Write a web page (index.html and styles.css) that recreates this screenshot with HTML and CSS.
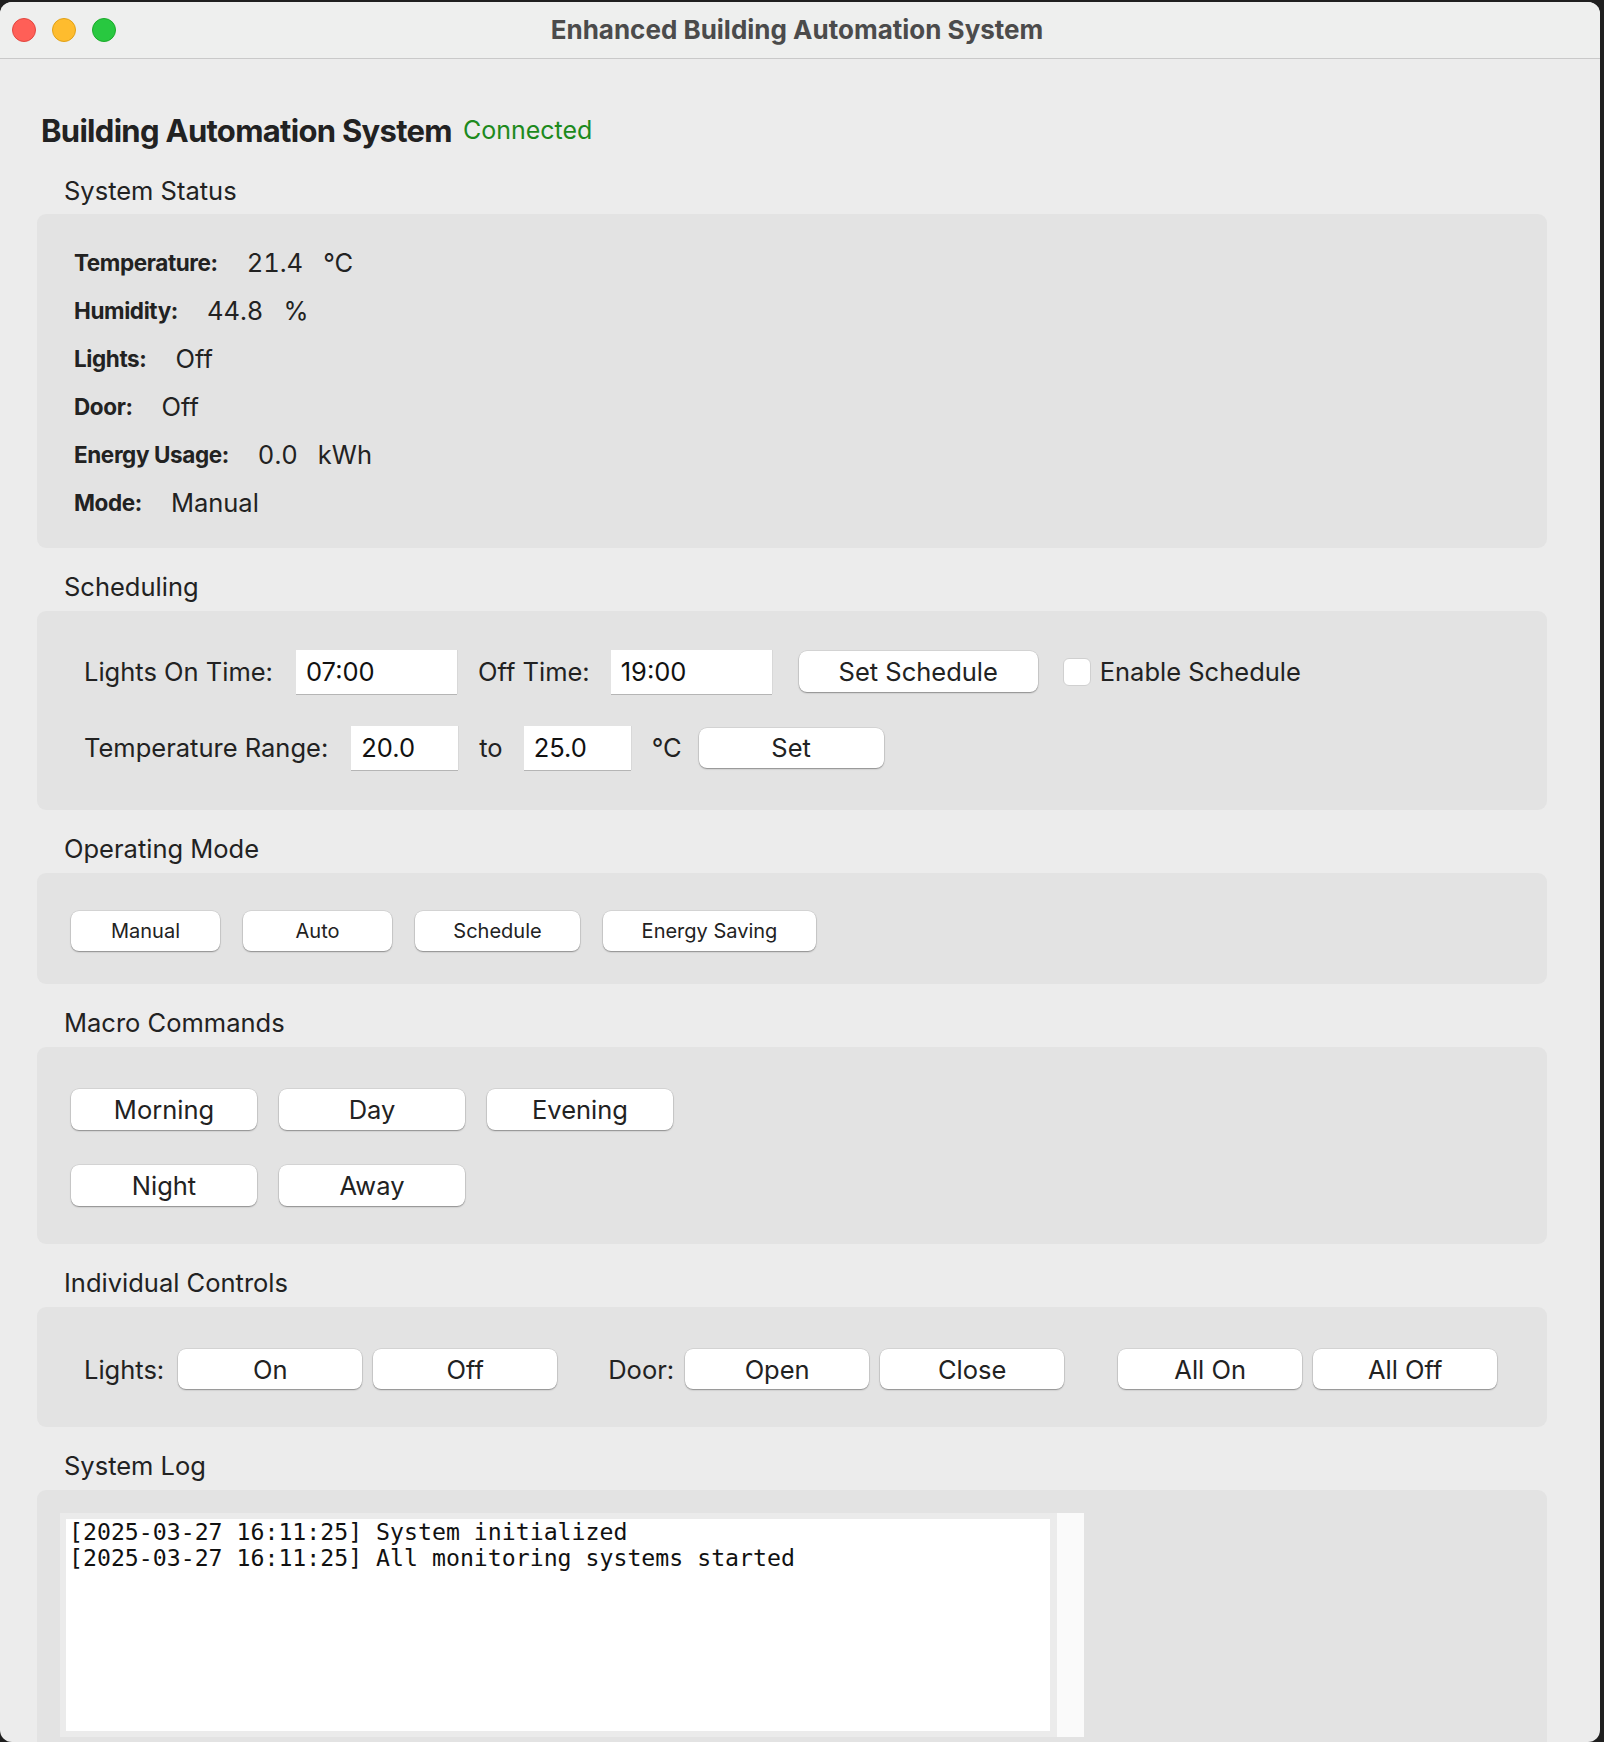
FILE: index.html
```html
<!DOCTYPE html>
<html>
<head>
<meta charset="utf-8">
<link rel="stylesheet" href="styles.css">
</head>
<body>
<div class="window">
  <div class="titlebar">
    <div class="lights">
      <span class="tl red"></span><span class="tl yellow"></span><span class="tl green"></span>
    </div>
    <div class="wtitle">Enhanced Building Automation System</div>
  </div>
  <div class="content">
    <div class="header">
      <span class="h1">Building Automation System</span>
      <span class="conn">Connected</span>
    </div>

    <div class="section-label first-label">System Status</div>
    <div class="panel status">
      <div class="srow"><span class="sl">Temperature:</span><span class="sv">21.4</span><span class="su">°C</span></div>
      <div class="srow"><span class="sl">Humidity:</span><span class="sv">44.8</span><span class="su">%</span></div>
      <div class="srow"><span class="sl">Lights:</span><span class="sv">Off</span></div>
      <div class="srow"><span class="sl">Door:</span><span class="sv">Off</span></div>
      <div class="srow"><span class="sl">Energy Usage:</span><span class="sv">0.0</span><span class="su">kWh</span></div>
      <div class="srow"><span class="sl">Mode:</span><span class="sv">Manual</span></div>
    </div>

    <div class="section-label">Scheduling</div>
    <div class="panel sched">
      <div class="row">
        <span class="lbl">Lights On Time:</span>
        <span class="inp w161 i-first">07:00</span>
        <span class="lbl">Off Time:</span>
        <span class="inp w161">19:00</span>
        <span class="btn b-setsched">Set Schedule</span>
        <span class="check-wrap"><span class="check"></span><span class="lbl">Enable Schedule</span></span>
      </div>
      <div class="row">
        <span class="lbl">Temperature Range:</span>
        <span class="inp w107 i-first">20.0</span>
        <span class="lbl">to</span>
        <span class="inp w107">25.0</span>
        <span class="lbl">°C</span>
        <span class="btn b-set">Set</span>
      </div>
    </div>

    <div class="section-label">Operating Mode</div>
    <div class="panel modes">
      <span class="btn small w149">Manual</span>
      <span class="btn small w149">Auto</span>
      <span class="btn small w165">Schedule</span>
      <span class="btn small w213">Energy Saving</span>
    </div>

    <div class="section-label">Macro Commands</div>
    <div class="panel macros">
      <span class="btn mbtn">Morning</span>
      <span class="btn mbtn">Day</span>
      <span class="btn mbtn">Evening</span>
      <span class="btn mbtn">Night</span>
      <span class="btn mbtn">Away</span>
    </div>

    <div class="section-label">Individual Controls</div>
    <div class="panel indiv">
      <span class="lbl">Lights:</span>
      <span class="btn ibtn first">On</span>
      <span class="btn ibtn">Off</span>
      <span class="lbl door">Door:</span>
      <span class="btn ibtn">Open</span>
      <span class="btn ibtn">Close</span>
      <span class="btn ibtn allon">All On</span>
      <span class="btn ibtn">All Off</span>
    </div>

    <div class="section-label">System Log</div>
    <div class="panel logpanel">
      <div class="logbox">
        <div class="logtext">[2025-03-27 16:11:25] System initialized
[2025-03-27 16:11:25] All monitoring systems started</div>
        <div class="scroll"></div>
      </div>
    </div>
  </div>
</div>
</body>
</html>
```
FILE: styles.css
```css
html, body {
  margin: 0;
  padding: 0;
  background: #1f1f1f;
}
body {
  width: 1604px;
  height: 1742px;
  overflow: hidden;
  font-family: Inter, "Liberation Sans", sans-serif;
  color: #222;
}
.window {
  margin-top: 2px;
  width: 1600px;
  height: 1740px;
  background: #ececec;
  border-radius: 12px;
  overflow: hidden;
}
.titlebar {
  position: relative;
  height: 56px;
  background: #eeefee;
  border-bottom: 1px solid #c9c9c9;
  display: flex;
  align-items: center;
  justify-content: center;
}
.lights {
  position: absolute;
  left: 12px;
  top: 16px;
  display: flex;
  gap: 16px;
}
.tl {
  width: 24px;
  height: 24px;
  border-radius: 50%;
  display: block;
  box-sizing: border-box;
}
.red { background: #ff5f57; border: 1px solid #e2463f; }
.yellow { background: #febc2e; border: 1px solid #e1a116; }
.green { background: #28c840; border: 1px solid #1aab29; }
.wtitle {
  font-weight: 700;
  font-size: 26px;
  color: #4b4b4b;
  margin-left: -6px;
  margin-top: -2px;
}
.content {
  padding: 53px 53px 0 37px;
}
.header {
  height: 36px;
  display: flex;
  align-items: center;
  padding-left: 4px;
  margin-bottom: 5px;
}
.h1 {
  font-weight: 700;
  font-size: 31px;
  letter-spacing: -0.7px;
  color: #222;
}
.conn {
  font-size: 25px;
  color: #1d8a1d;
  margin-left: 11px;
}
.section-label {
  padding-top: 24px;
  height: 30px;
  line-height: 30px;
  margin-bottom: 9px;
  padding-left: 27px;
  font-size: 25.5px;
  color: #222;
}
.first-label {
  padding-top: 23px;
  margin-bottom: 8px;
}
.panel {
  background: #e3e3e3;
  border-radius: 9px;
  box-sizing: border-box;
}
.status {
  padding: 24px 0 22px 37px;
}
.srow {
  height: 48px;
  display: flex;
  align-items: center;
}
.sl {
  font-weight: 700;
  font-size: 22.5px;
  letter-spacing: -0.4px;
}
.sv {
  font-size: 25.5px;
  margin-left: 29px;
  font-variant-numeric: tabular-nums;
}
.su {
  font-size: 25.5px;
  margin-left: 20px;
}
.lbl {
  font-size: 25.5px;
  color: #222;
}
.sched {
  padding: 38px 0 40px 47px;
}
.row {
  display: flex;
  align-items: center;
  height: 45px;
  gap: 21px;
}
.row + .row {
  margin-top: 31px;
}
.inp {
  background: #fff;
  height: 44px;
  box-sizing: border-box;
  padding: 0 10px;
  display: flex;
  align-items: center;
  font-size: 25.5px;
  color: #111;
  box-shadow: 0 1px 0 #b5b5b5, 1px 0 0 #d8d8d8;
}
.i-first {
  margin-left: 2px;
}
.w161 { width: 161px; }
.w107 { width: 107px; }
.btn {
  background: #fff;
  border-radius: 8px;
  box-shadow: 0 0 0 0.5px rgba(0,0,0,0.12), 0 1px 1.5px rgba(0,0,0,0.35);
  display: flex;
  align-items: center;
  justify-content: center;
  box-sizing: border-box;
  font-size: 25.5px;
  color: #222;
  height: 40px;
}
.b-setsched {
  width: 239px;
  height: 41px;
  margin-left: 6px;
}
.b-set {
  width: 185px;
  margin-left: -4px;
}
.check-wrap {
  display: flex;
  align-items: center;
  gap: 9px;
  margin-left: 4px;
}
.check {
  width: 28px;
  height: 28px;
  background: #fff;
  border-radius: 6px;
  box-sizing: border-box;
  border: 1px solid #d0d0d0;
}
.modes {
  padding: 38px 0 33px 34px;
  display: flex;
  gap: 23px;
}
.small {
  font-size: 20px;
}
.w149 { width: 149px; }
.w165 { width: 165px; }
.w213 { width: 213px; }
.macros {
  padding: 42px 0 38px 34px;
  display: grid;
  grid-template-columns: 186px 186px 186px;
  column-gap: 22px;
  row-gap: 35px;
}
.mbtn {
  height: 41px;
}
.indiv {
  padding: 42px 0 38px 47px;
  display: flex;
  align-items: center;
  gap: 11px;
}
.ibtn {
  width: 184px;
}
.ibtn.first {
  margin-left: 3px;
}
.door {
  margin-left: 40px;
}
.allon {
  margin-left: 43px;
}
.logpanel {
  padding: 23px 0 0 23px;
  height: 300px;
}
.logbox {
  width: 1024px;
  height: 224px;
  background: #ebebeb;
  display: flex;
  box-sizing: border-box;
  padding: 6px 0 6px 6px;
  gap: 7px;
}
.logtext {
  width: 984px;
  height: 212px;
  background: #fff;
  font-family: "DejaVu Sans Mono", "Liberation Mono", monospace;
  font-size: 23.2px;
  line-height: 26px;
  white-space: pre;
  color: #111;
  padding: 0 3px;
  box-sizing: border-box;
}
.scroll {
  width: 27px;
  margin: -6px 0;
  background: #fafafa;
}
```
